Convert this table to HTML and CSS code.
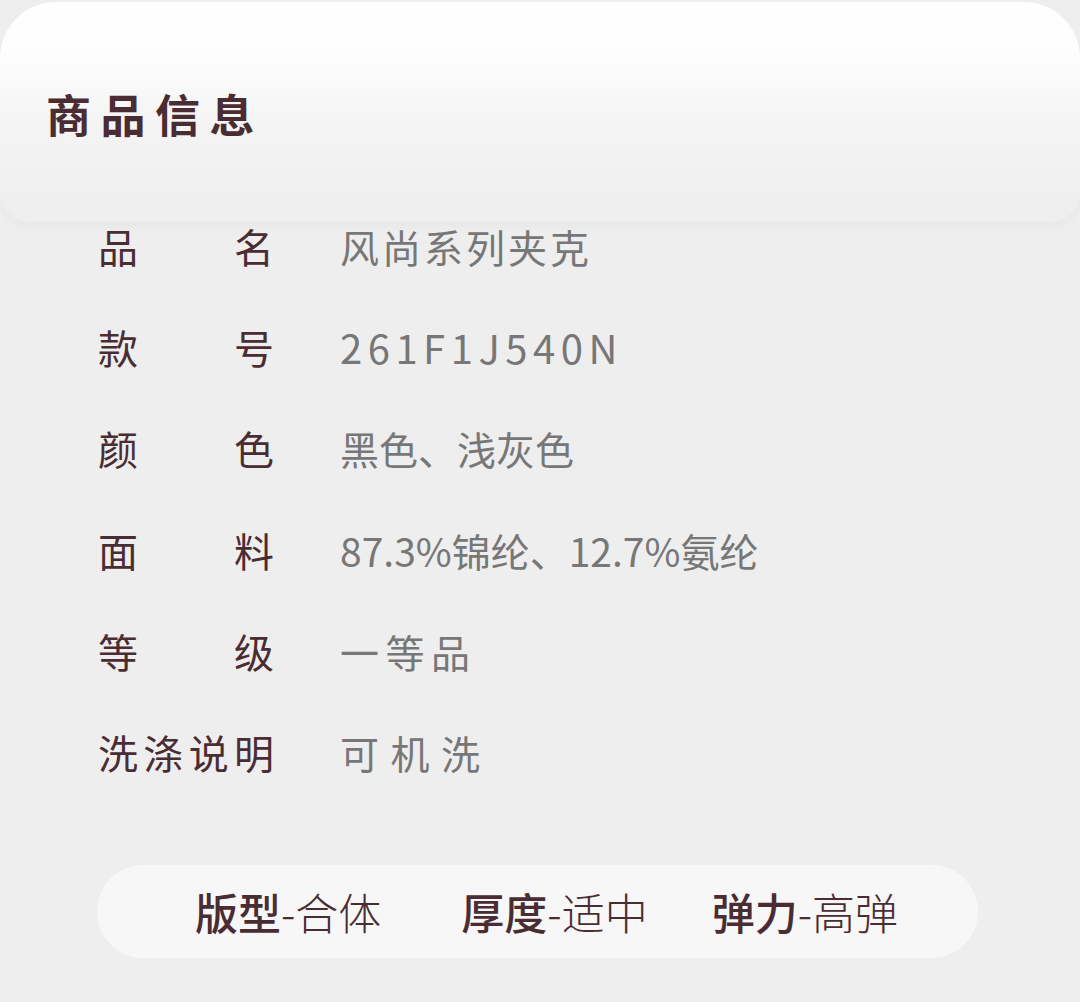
FILE: index.html
```html
<!DOCTYPE html>
<html lang="zh-CN">
<head>
<meta charset="utf-8">
<link rel="stylesheet" href="styles.css">
</head>
<body>
<div class="page">
  <header class="head">
    <h1 class="title">商品信息</h1>
  </header>
  <div class="list">
    <div class="row"><span class="label">品名</span><span class="value sp3">风尚系列夹克</span></div>
    <div class="row"><span class="label">款号</span><span class="value code">261F1J540N</span></div>
    <div class="row"><span class="label">颜色</span><span class="value">黑色、浅灰色</span></div>
    <div class="row"><span class="label">面料</span><span class="value sp1">87.3%锦纶、12.7%氨纶</span></div>
    <div class="row"><span class="label">等级</span><span class="value sp7">一等品</span></div>
    <div class="row"><span class="label">洗涤说明</span><span class="value sp12">可机洗</span></div>
  </div>
  <div class="pill">
    <span class="tag"><b>版型</b>-合体</span>
    <span class="tag"><b>厚度</b>-适中</span>
    <span class="tag"><b>弹力</b>-高弹</span>
  </div>
</div>
</body>
</html>
```
FILE: styles.css
```css
html, body {
  margin: 0;
  padding: 0;
  background: #eeeeee;
}
.page {
  width: 1080px;
  height: 1002px;
  overflow: hidden;
  font-family: "Noto Sans CJK SC", "Noto Sans", sans-serif;
}
.head {
  height: 220px;
  box-sizing: border-box;
  padding: 84px 0 0 46px;
  border-radius: 56px 56px 30px 30px;
  background: linear-gradient(#ffffff 0%, #fdfdfd 25%, #f4f4f4 55%, #eeeeee 100%);
  box-shadow: 0 6px 10px rgba(0, 0, 0, 0.025);
  margin-top: 2px;
}
.title {
  margin: 0;
  font-size: 45px;
  line-height: 56px;
  font-weight: 700;
  letter-spacing: 9.5px;
  color: #4a2c33;
}
.list {
  display: flex;
  flex-direction: column;
  gap: 53.2px;
  padding-left: 98px;
}
.row {
  display: flex;
  align-items: center;
  height: 48px;
}
.label {
  width: 176px;
  font-size: 40px;
  line-height: 48px;
  color: #4a2c33;
  text-align: justify;
  text-align-last: justify;
}
.value {
  margin-left: 66px;
  font-size: 39px;
  line-height: 48px;
  font-weight: 400;
  color: #777777;
}
.value.code {
  letter-spacing: 5.5px;
  font-size: 40px;
}
.value.sp1 { letter-spacing: 0; }
.value.sp3 { letter-spacing: 3px; }
.value.sp7 { letter-spacing: 6.5px; }
.value.sp12 { letter-spacing: 11.5px; }
.pill {
  margin: 89px 0 0 97px;
  width: 881px;
  height: 93px;
  box-sizing: border-box;
  border-radius: 47px;
  background: #f7f7f7;
  display: flex;
  align-items: center;
  padding-left: 98px;
  color: #4a2c33;
  font-size: 43px;
  font-weight: 300;
}
.tag b {
  font-weight: 500;
}
.tag:nth-child(1) {
  margin-right: 80px;
}
.tag:nth-child(2) {
  margin-right: 64px;
}
```
